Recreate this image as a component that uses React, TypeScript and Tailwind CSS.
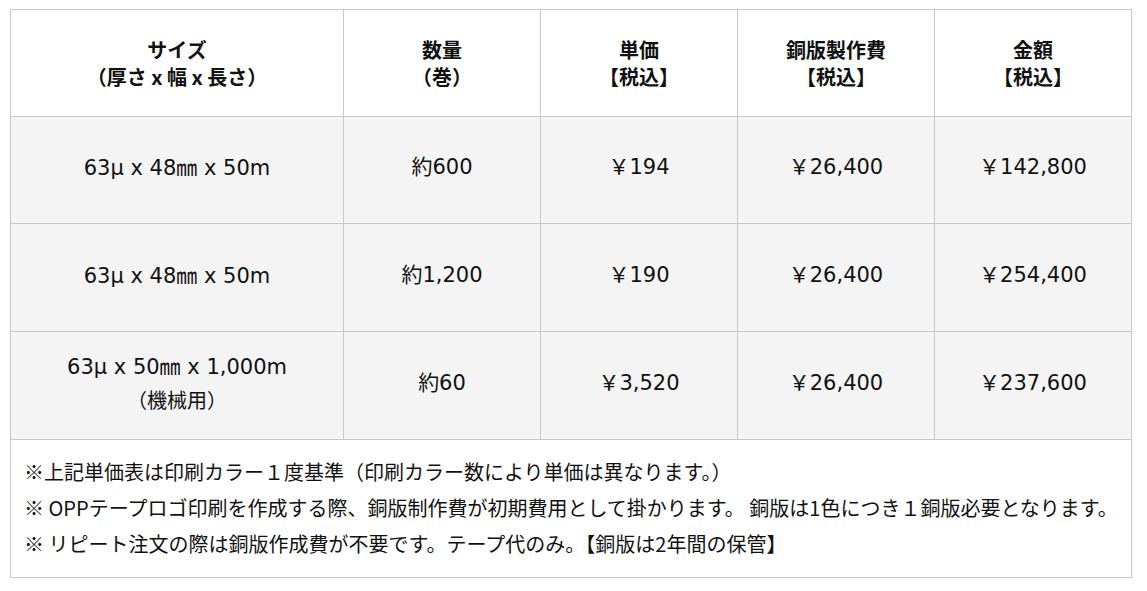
const font = { fontFamily: '"Noto Sans CJK JP", "Noto Sans", sans-serif' };
const numFont = { fontFamily: '"DejaVu Sans", "Noto Sans CJK JP", sans-serif' };

const headers: string[][] = [
  ['サイズ', '（厚さ x 幅 x 長さ）'],
  ['数量', '（巻）'],
  ['単価', '【税込】'],
  ['銅版製作費', '【税込】'],
  ['金額', '【税込】'],
];

const rows: { size: string[]; qty: string; unit: string; plate: string; total: string; h: string }[] = [
  { size: ['63μ x 48㎜ x 50m'], qty: '約600', unit: '￥194', plate: '￥26,400', total: '￥142,800', h: 'h-[107px]' },
  { size: ['63μ x 48㎜ x 50m'], qty: '約1,200', unit: '￥190', plate: '￥26,400', total: '￥254,400', h: 'h-[108px]' },
  { size: ['63μ x 50㎜ x 1,000m', '（機械用）'], qty: '約60', unit: '￥3,520', plate: '￥26,400', total: '￥237,600', h: 'h-[108px]' },
];

const cols = 'grid grid-cols-[333px_197px_197px_197px_1fr]';

export default function App() {
  return (
    <div className="min-h-[591px] w-[1147px] bg-white pl-[10px] pt-[9px] text-[#111]" style={font}>
      <div className="w-[1122px] border border-[#c8c8c8]">
        {/* header */}
        <div className={`${cols} h-[107px] border-b border-[#c8c8c8] bg-white`}>
          {headers.map((h, i) => (
            <div
              key={i}
              className={`flex flex-col items-center justify-center text-[20px] font-bold leading-[27px] ${i < 4 ? 'border-r border-[#c8c8c8]' : ''}`}
            >
              {h.map((t, j) => (
                <span key={j}>{t}</span>
              ))}
            </div>
          ))}
        </div>

        {rows.map((r, ri) => (
          <div key={ri} className={`${cols} ${r.h} border-b border-[#c8c8c8] bg-[#f4f4f4] text-[21px]`} style={numFont}>
            <div className="flex flex-col items-center justify-center border-r border-[#c8c8c8] pb-[4px] leading-[34px]">
              {r.size.map((t, j) => (
                <span key={j} className={j === 1 ? 'text-[20px]' : ''}>{t}</span>
              ))}
            </div>
            <div className="flex items-center justify-center border-r border-[#c8c8c8] pb-[4px]">{r.qty}</div>
            <div className="flex items-center justify-center border-r border-[#c8c8c8] pb-[4px]">{r.unit}</div>
            <div className="flex items-center justify-center border-r border-[#c8c8c8] pb-[4px]">{r.plate}</div>
            <div className="flex items-center justify-center pb-[4px]">{r.total}</div>
          </div>
        ))}

        {/* notes */}
        <div className="flex h-[137px] flex-col justify-center whitespace-nowrap px-[13px] pb-[2px] text-[20px] leading-[36px]">
          <p>※上記単価表は印刷カラー１度基準（印刷カラー数により単価は異なります。）</p>
          <p>※ OPPテープロゴ印刷を作成する際、銅版制作費が初期費用として掛かります。 銅版は1色につき１銅版必要となります。</p>
          <p>※ リピート注文の際は銅版作成費が不要です。テープ代のみ。【銅版は2年間の保管】</p>
        </div>
      </div>
    </div>
  );
}
